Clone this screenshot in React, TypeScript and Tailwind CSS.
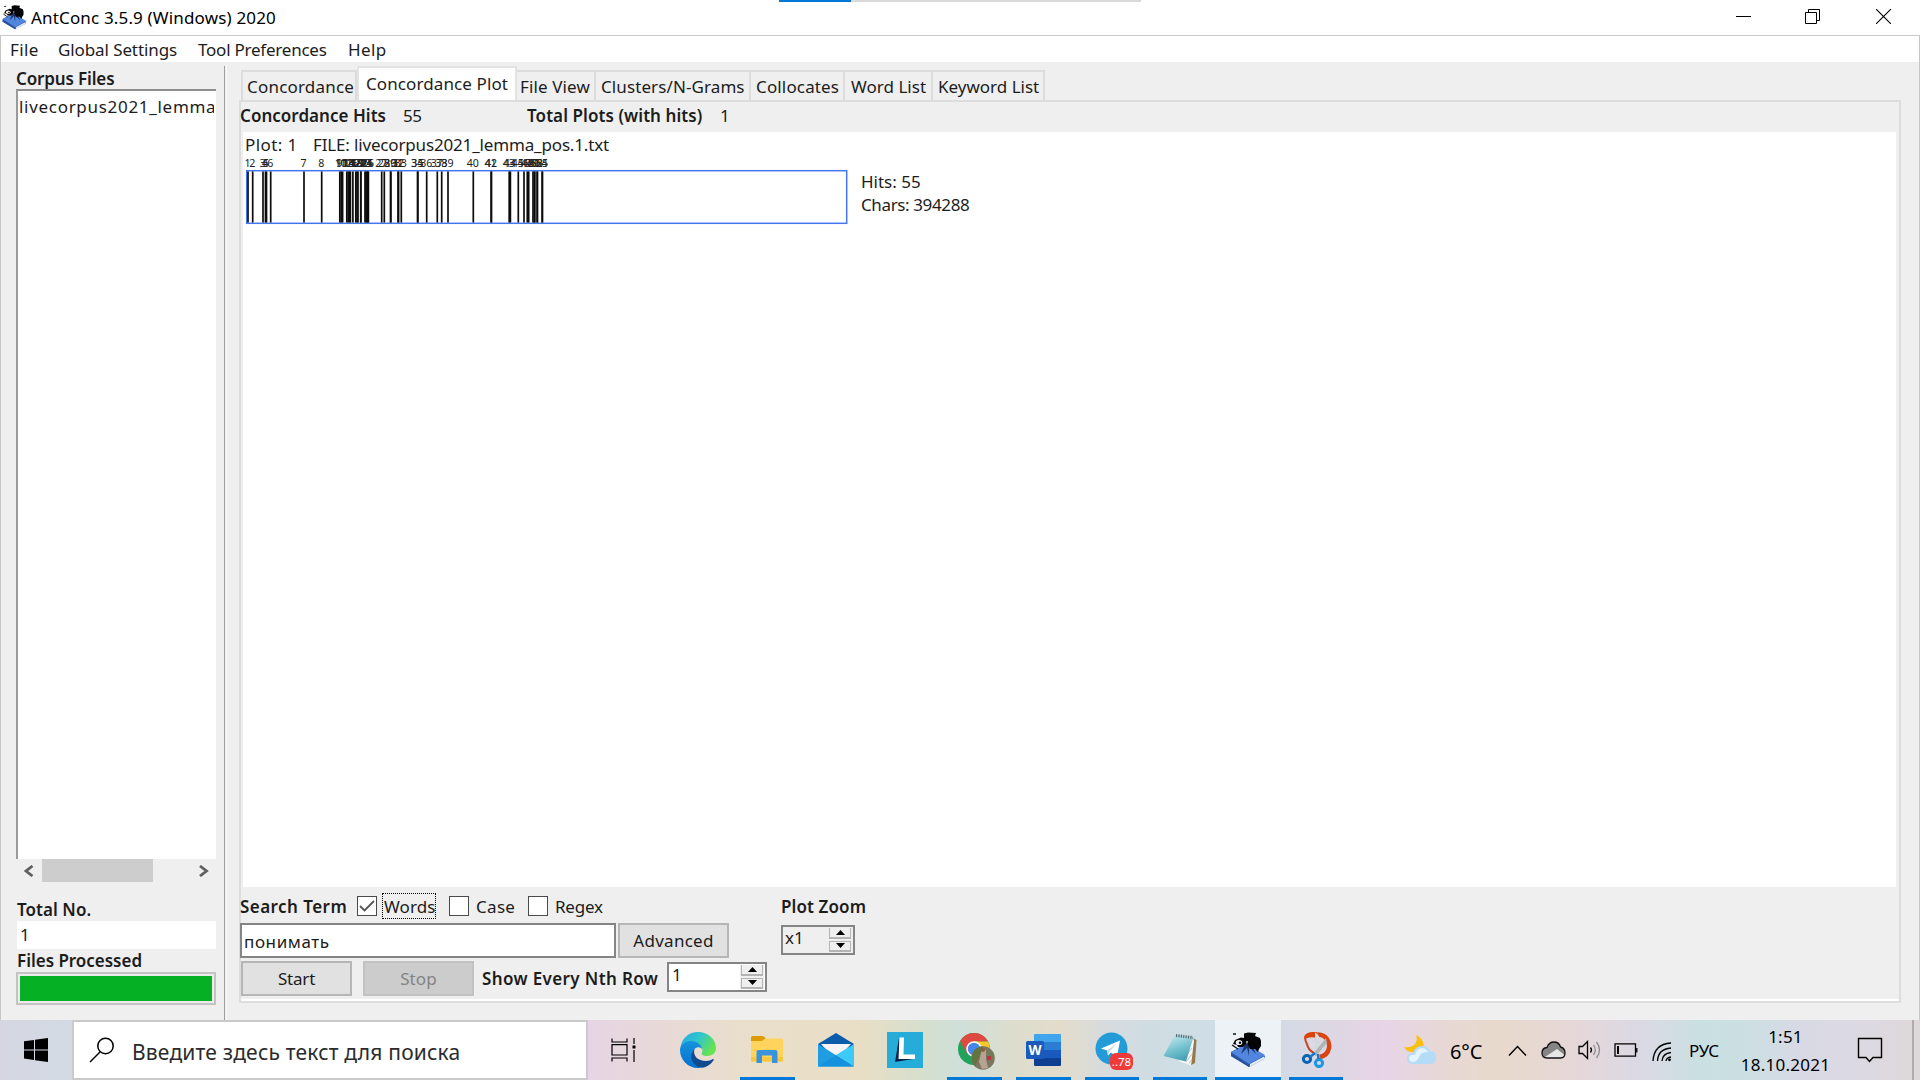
import React from "react";

/* ---------- window chrome ---------- */

function AntIcon({ className }: { className: string }) {
  return (
    <svg className={className} viewBox="0 0 36 36">
      <path d="M1 20 L16 12 L35 24 L34 27 L19 35 L1 24Z" fill="#3560b4" />
      <path d="M1 20 L16 12 L35 23 L19 32Z" fill="#5285dd" />
      <path d="M20 32 L34 24.5 L34 27 L20 34.5Z" fill="#e6ebf2" />
      <path d="M1 21 L19 32.5 L19 35 L1 24Z" fill="#29519e" />
      <path d="M11 22 L15 12 L21 11 L26 22 L19 15 L19 24 L17 16Z" fill="#1c3770" />
      <path
        d="M3 12 L5 8 L11 5.500 L14 6 L14 1.500 L18 0.500 L26 1 L25 4 L30 6 L31 9 L31 14 L29 17 L28 20 L25 17 L20 17 L17 11 L13 15 L8 15 L7 13Z"
        fill="#050507"
      />
      <ellipse cx="9" cy="10.500" rx="3.300" ry="2.600" fill="#f2f2f2" />
      <ellipse cx="10" cy="10.800" rx="1.300" ry="1.200" fill="#111" />
      <path d="M2 13 L8 17 M3 2 H6" stroke="#111" strokeWidth="1.300" />
      <circle cx="17" cy="10" r="1" fill="#b9c6dd" />
    </svg>
  );
}

function TitleBar() {
  return (
    <header className="relative flex h-9 items-center border-b border-[#cccccc] bg-white">
      <div className="absolute left-[779px] top-0 flex h-[2px]">
        <span className="w-[72px] bg-[#0078d7]" />
        <span className="w-[290px] bg-[#dadada]" />
      </div>
      <AntIcon className="ml-[2px] mt-[-1px] h-[25px] w-[25px]" />
      <span className="ml-[4px] text-[17px] tracking-[0.16px] text-black">AntConc 3.5.9 (Windows) 2020</span>
      <div className="ml-auto mr-[29px] flex items-center gap-[54px] pb-[2px] text-black">
        <svg className="h-[15px] w-[15px]" viewBox="0 0 15 15">
          <path d="M0 7.5H15" stroke="currentColor" />
        </svg>
        <svg className="h-[15px] w-[15px]" viewBox="0 0 15 15" fill="none" stroke="currentColor">
          <path d="M.5 3.5H11.5V14.5H.5Z" />
          <path d="M3.5 3.5V.5H14.5V11.5H11.5" />
        </svg>
        <svg className="ml-[2px] h-[15px] w-[15px]" viewBox="0 0 15 15">
          <path d="M0 0L15 15M15 0L0 15" stroke="currentColor" strokeWidth="1.1" />
        </svg>
      </div>
    </header>
  );
}

function MenuBar() {
  return (
    <nav className="flex h-[26px] items-center bg-white pl-[9px]">
      <span className="w-12 tracking-[0.4px]">File</span>
      <span className="w-[140px] tracking-[-0.1px]">Global Settings</span>
      <span className="w-[150px] tracking-[-0.23px]">Tool Preferences</span>
      <span className="tracking-[0.4px]">Help</span>
    </nav>
  );
}

/* ---------- left column ---------- */

function CorpusColumn() {
  return (
    <aside className="flex w-[223px] shrink-0 flex-col pl-[15px] pr-[8px]">
      <h2 className="mt-[3px] h-6 text-[17px] font-semibold leading-[27px] tracking-[-0.14px]">Corpus Files</h2>
      <div className="h-[770px] overflow-hidden border-l-2 border-t-2 border-l-[#9a9a9a] border-t-[#8e8e8e] bg-white pl-[1px]">
        <div className="w-[195px] overflow-hidden whitespace-nowrap leading-[31px] tracking-[0.7px]">livecorpus2021_lemma_pos</div>
      </div>
      <div className="flex h-[23px] items-center text-[#606060]">
        <svg className="ml-[7px] h-3 w-[11px]" viewBox="0 0 11 12" fill="none" stroke="currentColor" strokeWidth="2.8">
          <path d="M9.5 1L3 6L9.5 11" />
        </svg>
        <span className="ml-[8px] h-full w-[111px] bg-[#cdcdcd]" />
        <svg className="ml-[46px] h-3 w-[11px]" viewBox="0 0 11 12" fill="none" stroke="currentColor" strokeWidth="2.8">
          <path d="M1 1L7.5 6L1 11" />
        </svg>
      </div>
      <h2 className="mt-[14px] h-6 pl-px font-semibold leading-[27px] tracking-[0.05px]">Total No.</h2>
      <div className="mt-[1px] ml-px h-7 bg-white pl-[3px] leading-[28px]">1</div>
      <h2 className="h-[24px] pl-px font-semibold leading-[24px] tracking-[-0.02px]">Files Processed</h2>
      <div className="mt-[-1px] h-[33px] border-2 border-[#c3c3c3] bg-[#ececec] p-[2px]">
        <div className="h-full bg-[#06b025]" />
      </div>
    </aside>
  );
}

/* ---------- tool panel ---------- */

function Tabs() {
  const tab = "flex h-[30px] items-center border-r-2 border-t-2 border-[#dcdcdc] pt-[1px] whitespace-nowrap";
  return (
    <div className="flex h-[38px] items-end pl-[2px]">
      <span className={`${tab} w-[116px] border-l-2 border-r-0 pl-[4px] tracking-[0.2px]`}>Concordance</span>
      <span className="flex h-[34px] w-[160px] items-center border-x-2 border-t-2 border-[#e3e3e3] bg-white pb-px pl-[7px] tracking-[0.1px] whitespace-nowrap">
        Concordance Plot
      </span>
      <span className={`${tab} w-[79px] pl-[3px] tracking-[0.12px]`}>File View</span>
      <span className={`${tab} w-[155px] pl-[5px] tracking-[0.1px]`}>Clusters/N-Grams</span>
      <span className={`${tab} w-[94px] pl-[5px] tracking-[0.15px]`}>Collocates</span>
      <span className={`${tab} w-[88px] pl-[6px] tracking-[0.02px]`}>Word List</span>
      <span className={`${tab} w-[112px] pl-[5px] tracking-[0px]`}>Keyword List</span>
    </div>
  );
}

const HITS: number[] = [
  248, 252.7, 263, 265.5, 266.5, 270.7, 304, 321.7, 339.8, 341.2, 342.6, 346.8, 348.2, 349.6, 350.4, 352.9, 355.8, 357,
  358, 360.7, 360.9, 365, 366, 367, 367.8, 368.4, 381.7, 384.3, 390.5, 390.9, 398, 398.6, 401.3, 417.5, 417.9, 426.7,
  437.3, 441.7, 448, 473.3, 491.1, 491.5, 509.2, 510.4, 518.3, 524, 527.3, 528.7, 533, 534.4, 534.8, 537.1, 537.5,
  542.1, 542.5,
];

function PlotChart() {
  return (
    <svg className="block h-[70px] w-[610px]" viewBox="243 157 610 70">
      {HITS.map((x, i) => (
        <text key={i} x={x - 0.5} y="166.6" textAnchor="middle" fontSize="10.6" fill="#222" className="font-['Noto_Sans']">
          {i + 1}
        </text>
      ))}
      <rect x="246.7" y="170.7" width="600" height="52.6" fill="none" stroke="#4478ee" strokeWidth="1.5" />
      {HITS.map((x, i) => (
        <path key={i} d={`M${x} 171.500V222.500`} stroke="#0c0c0c" strokeWidth="1.7" />
      ))}
    </svg>
  );
}

function Checkbox({ checked }: { checked?: boolean }) {
  return (
    <span className="flex h-5 w-5 items-center justify-center border-[1.5px] border-[#4a4a4a] bg-white">
      {checked && (
        <svg className="h-4 w-4" viewBox="0 0 16 16" fill="none" stroke="#555" strokeWidth="1.8">
          <path d="M1 8L5.5 12.5L15 3" />
        </svg>
      )}
    </span>
  );
}

function Spinner({ className, value }: { className: string; value: string }) {
  return (
    <span className={`flex h-[30px] justify-between border-2 border-[#858585] p-px leading-[20px] ${className}`}>
      <span className="pl-[1px]">{value}</span>
      <span className="flex w-[24px] flex-col gap-[2px] bg-[#efefef] pl-px pr-px">
        <span className="flex flex-1 items-center justify-center border-x border-b-2 border-[#b4b4b4]">
          <svg className="h-[5px] w-[9px]" viewBox="0 0 9 5">
            <path d="M0 5L4.500 0L9 5Z" fill="#000" />
          </svg>
        </span>
        <span className="flex flex-1 items-center justify-center border border-b-2 border-[#b4b4b4]">
          <svg className="h-[5px] w-[9px]" viewBox="0 0 9 5">
            <path d="M0 0L4.500 5L9 0Z" fill="#000" />
          </svg>
        </span>
      </span>
    </span>
  );
}

function Controls() {
  return (
    <div className="flex flex-col">
      <div className="flex h-[36px] items-center pt-[2px]">
        <span className="w-[117px] font-semibold tracking-[0.45px]">Search Term</span>
        <Checkbox checked />
        <span className="ml-[5px] flex h-[26px] w-[54px] items-center border border-dotted border-black pl-px tracking-[0.1px]">Words</span>
        <span className="ml-[13px] flex">
          <Checkbox />
        </span>
        <span className="ml-[7px] w-[52px] tracking-[0.3px]">Case</span>
        <Checkbox />
        <span className="ml-[7px] w-[226px] tracking-[-0.2px]">Regex</span>
        <span className="font-semibold tracking-[0.1px]">Plot Zoom</span>
      </div>
      <div className="flex h-[35px]">
        <div className="flex w-[376px] items-center border-2 border-[#858585] bg-white pl-[2px] pt-[2px] tracking-[0.6px]">понимать</div>
        <div className="ml-[2px] flex w-[111px] items-center justify-center border-2 border-[#b6b6b6] bg-[#e1e1e1] tracking-[0.28px]">
          Advanced
        </div>
        <span className="ml-[52px] mt-[2px] flex">
          <Spinner value="x1" className="w-[74px]" />
        </span>
      </div>
      <div className="mt-[3px] flex h-[35px] items-stretch pl-px">
        <div className="flex w-[111px] items-center justify-center border-2 border-[#b6b6b6] bg-[#e1e1e1] tracking-[-0.2px]">Start</div>
        <div className="ml-[11px] flex w-[111px] items-center justify-center border-2 border-[#c2c2c2] bg-[#cccccc] tracking-[0.1px] text-[#838383]">
          Stop
        </div>
        <span className="ml-[8px] w-[185px] font-semibold leading-[35px] tracking-[0.37px]">Show Every Nth Row</span>
        <span className="mt-[1px] flex">
          <Spinner value="1" className="w-[100px] bg-white pl-[2px]" />
        </span>
      </div>
    </div>
  );
}

function ToolPanel() {
  return (
    <section className="ml-[12px] flex w-[1662px] flex-col">
      <Tabs />
      <div className="flex h-[903px] flex-col border-2 border-[#dddddd]">
        <div className="flex h-[30px] items-center pb-[3px]">
          <span className="-ml-px w-[163px] font-semibold tracking-[0.03px]">Concordance Hits</span>
          <span className="w-[124px] tracking-[-0.5px]">55</span>
          <span className="w-[193px] font-semibold tracking-[0.08px]">Total Plots (with hits)</span>
          <span>1</span>
        </div>
        <div className="ml-[2px] mr-[3px] flex h-[755px] flex-col bg-white">
          <div className="flex h-[25px] items-center pb-px pl-[2px]">
            <span className="w-[68px] tracking-[0.4px]">Plot: 1</span>
            <span className="tracking-[-0.16px]">FILE: livecorpus2021_lemma_pos.1.txt</span>
          </div>
          <div className="flex">
            <PlotChart />
            <div className="ml-[8px] pt-[13px] leading-[23px]">
              <div>Hits: 55</div>
              <div className="tracking-[-0.38px]">Chars: 394288</div>
            </div>
          </div>
        </div>
        <div className="-ml-px">
          <Controls />
        </div>
        <div className="mt-auto h-[2px] bg-white" />
      </div>
    </section>
  );
}

/* ---------- taskbar icons ---------- */

function EdgeIcon() {
  return (
    <svg className="h-9 w-9" viewBox="0 0 36 36">
      <defs>
        <linearGradient id="edgeTop" x1="0" y1="0" x2="1" y2="0.5">
          <stop offset="0" stopColor="#2aa6e0" />
          <stop offset=".5" stopColor="#2fc5cf" />
          <stop offset="1" stopColor="#66e34f" />
        </linearGradient>
        <linearGradient id="edgeBody" x1="0" y1="0" x2="0" y2="1">
          <stop offset="0" stopColor="#1593dd" />
          <stop offset="1" stopColor="#0670cf" />
        </linearGradient>
      </defs>
      <path d="M0.500 15C2 6 9 0 18 0C28 0 36 7 36 16C36 21 32 24 27 24C23 24 21 22.500 22 20.500C24 17 21 13 16 11C10 9 4 11 0.500 15Z" fill="url(#edgeTop)" />
      <path d="M0 18C0 13 5 9 11 9C17 9 22 13 22.500 18C22 15 17 14 14.500 17C11 22 15 31 24 33.500C22 35.500 19 36 18 36C8 36 0 28 0 18Z" fill="url(#edgeBody)" />
      <path d="M14.500 17C12.500 24 18 29 26 29C29 29 31 28 33 27C34 27 34 28 33.500 28.500C30 33 27 35 22 35.800C12 34 8 24 14.500 17Z" fill="#114b8f" />
    </svg>
  );
}

function FolderIcon() {
  return (
    <svg className="h-7 w-8" viewBox="0 0 32 28">
      <path d="M0 1.500Q0 0 1.500 0H12L15 2.500L12 5H0Z" fill="#dd9b05" />
      <path d="M0 5H11L14 2.500H30.500Q32 2.500 32 4V24Q32 25.500 30.500 25.500H1.500Q0 25.500 0 24Z" fill="#ffd35c" />
      <path d="M0 21H32V24Q32 25.500 30.500 25.500H1.500Q0 25.500 0 24Z" fill="#fbc63f" />
      <path d="M5.500 27V16Q5.500 14 7.500 14H24.500Q26.500 14 26.500 16V27H21V19.500H11V27Z" fill="#3a94dd" />
    </svg>
  );
}

function MailIcon() {
  return (
    <svg className="h-[34px] w-9" viewBox="0 0 36 34">
      <path d="M0 11L18 0L36 11L31 17H5Z" fill="#0b5cab" />
      <path d="M3 11H33L22 23H14Z" fill="#f4f4f6" />
      <path d="M0 11L36 33.500H0Z" fill="#1e9de3" />
      <path d="M36 11V33.500L18 22Z" fill="#3ccbf8" />
      <path d="M0 33.500L18 22L36 33.500Z" fill="#1591dd" />
    </svg>
  );
}

function LenovoIcon() {
  return (
    <svg className="h-9 w-9" viewBox="0 0 36 36">
      <path d="M0 0H36V36H0Z" fill="#26acd9" />
      <path d="M12 6L8 30L26 27L13 25Z" fill="#08234d" />
      <path d="M12.500 5.500H17L16.500 22.500H28V27H11.500Z" fill="#fff" />
    </svg>
  );
}

function ChromeIcon() {
  return (
    <svg className="mt-[2px] h-[38px] w-[38px]" viewBox="0 0 38 38">
      <circle cx="17" cy="17" r="16" fill="#22a35c" />
      <path d="M3.100 9A16 16 0 0 1 31 9.500H17L9.500 21Z" fill="#de4a3f" />
      <path d="M17 9.500H31A16 16 0 0 1 18 33L24.500 21Z" fill="#fcc62c" />
      <circle cx="17" cy="17" r="7.800" fill="#fff" />
      <circle cx="17" cy="17" r="6.200" fill="#4687ee" />
      <circle cx="26" cy="26" r="11.800" fill="#7d7560" />
      <path d="M15 23Q17 15 26 14.300L22 25L18 34Q14 30 15 23Z" fill="#62753f" />
      <path d="M25 17L29 18L29 27L31 36L25 37L22 30Z" fill="#b7a392" />
      <path d="M31 18L36 21L37 30L31 27Z" fill="#6e7d58" />
      <path d="M30 24H34V28H30Z" fill="#bb3540" />
      <circle cx="26" cy="18" r="2" fill="#8d5b3e" />
    </svg>
  );
}

function WordIcon() {
  return (
    <svg className="h-[34px] w-9" viewBox="0 0 36 34">
      <path d="M9 2Q9 1 10 1H35Q36 1 36 2V9H9Z" fill="#41a5ee" />
      <path d="M9 9H36V17H9Z" fill="#2b7cd3" />
      <path d="M9 17H36V25H9Z" fill="#185abd" />
      <path d="M9 25H36V32Q36 33 35 33H10Q9 33 9 32Z" fill="#103f91" />
      <rect x="1" y="8" width="18" height="18" rx="1.500" fill="#1b5abb" />
      <text x="10" y="22" textAnchor="middle" fontSize="13.500" fontWeight="700" fill="#fff" className="font-['Open_Sans']">
        W
      </text>
    </svg>
  );
}

function TelegramIcon() {
  return (
    <svg className="ml-[4px] mt-[2px] h-[38px] w-[38px]" viewBox="0 0 38 38">
      <circle cx="16.500" cy="16.500" r="16" fill="#239bd7" />
      <path d="M6 16.500L25 8.500L22 25L16 20.500L13 23.500L12 18.500Z" fill="#fff" />
      <path d="M12 18.500L22 11.500L14.500 19.500L13 23.500Z" fill="#bcdcec" />
      <rect x="15" y="21" width="23" height="17" rx="6" fill="#f03a3a" />
      <text x="26.500" y="33.800" textAnchor="middle" fontSize="11.500" fill="#fff" className="font-['Noto_Sans']">
        ..78
      </text>
    </svg>
  );
}

function NotepadIcon() {
  return (
    <svg className="h-[34px] w-9" viewBox="0 0 36 34">
      <defs>
        <linearGradient id="pad" x1="0" y1="0" x2="0.4" y2="1">
          <stop offset="0" stopColor="#d4eef2" />
          <stop offset=".6" stopColor="#76c3d0" />
          <stop offset="1" stopColor="#49a4b7" />
        </linearGradient>
      </defs>
      <path d="M31 5L34.500 7L33 30L29 32Z" fill="#96784a" />
      <path d="M31 4L32 8L29 32.500L17 28Z" fill="#f6f6f4" />
      <path d="M21 27L30 15M24 29L30 21M27 30.500L30 26" stroke="#aeb6b8" strokeWidth=".8" />
      <path d="M13 2L31.500 4L24 28.500L1.500 23Z" fill="url(#pad)" />
      <path d="M14 2.500L31 4.500" stroke="#59666b" strokeWidth="3" strokeDasharray="1.200 1.200" />
    </svg>
  );
}

function SnipIcon() {
  return (
    <svg className="ml-[2px] h-9 w-[30px]" viewBox="0 0 30 36">
      <path d="M14 2.500C4 0 1 5 5 12C6 17 8 19 12 21" fill="none" stroke="#c9431a" strokeWidth="2" />
      <path d="M2 5C4 0 11 -0.500 16 0.500L15 6Q8 4 3 7Z" fill="#dd4208" />
      <path d="M16 2.500C24 3 28 9 27 16C26 21 23 24 18 25" fill="none" stroke="#d94410" strokeWidth="4.500" />
      <path d="M13 0L17 4L17 21L13 22Z" fill="#d5d9dc" />
      <path d="M24 6L25 11L14 24L11 22Z" fill="#aeb4b8" />
      <circle cx="5" cy="27" r="3.600" fill="none" stroke="#0b63b4" strokeWidth="3" />
      <circle cx="17" cy="31" r="3.600" fill="none" stroke="#1a97e3" strokeWidth="3" />
      <path d="M8 25L13 21M16.500 27L16 22" stroke="#137bcd" strokeWidth="2.500" />
    </svg>
  );
}

function TaskButton({ className, running, children }: { className: string; running?: string; children: React.ReactNode }) {
  return (
    <div className={`relative flex h-full items-center justify-center ${className}`}>
      {children}
      {running && <span className={`absolute bottom-0 h-[3px] bg-[#0078d7] ${running}`} />}
    </div>
  );
}

function Tray() {
  return (
    <div className="ml-auto flex h-full items-center text-black">
      <svg className="h-[32px] w-[34px]" viewBox="0 0 34 32">
        <path d="M12 1Q14 6 11 10Q7 14 0 13Q3 19 10 18L20 12Q19 4 12 1Z" fill="#fbbf10" />
        <path d="M9 30Q3 30 3 24.500Q3 19 9 19Q11 12 18 12Q24 12 26 17Q32 17 32 24Q32 30 26 30Z" fill="#b4dcf6" />
        <path d="M9 28Q5 28 5 24Q6 20 11 21Q12 15 18 14Q22 14 24 18Q17 18 15 23Q13 28 9 28Z" fill="#e3f4fe" />
      </svg>
      <span className="ml-[12px] mt-[3px] w-[58px] text-[20px] tracking-[-0.1px]">6°C</span>
      <svg className="h-[11px] w-[19px]" viewBox="0 0 19 11" fill="none" stroke="currentColor" strokeWidth="1.400">
        <path d="M1 10.500L9.500 1.500L18 10.500" />
      </svg>
      <svg className="ml-[14px] h-[18px] w-[25px]" viewBox="0 0 25 18">
        <path d="M6 17Q1 17 1 12Q1 7 6 6.500Q8 1 13 1Q18 1 19.500 6Q24 7 24 12Q24 17 19.500 17Z" fill="#858585" />
        <path d="M4 16L16 8L23.500 14Q22 17 19 17H6Z" fill="#e6e6e6" />
        <path d="M6 17Q1 17 1 12Q1 7 6 6.500Q8 1 13 1Q18 1 19.500 6Q24 7 24 12Q24 17 19.500 17Z" fill="none" stroke="#111" strokeWidth="1.300" />
      </svg>
      <svg className="ml-[12px] h-[20px] w-[24px]" viewBox="0 0 24 20" fill="none" stroke="currentColor" strokeWidth="1.300">
        <path d="M1 6.500H4.500L9.500 1.500V18.500L4.500 13.500H1Z" />
        <path d="M12.500 7.500Q14.500 10 12.500 12.500" />
        <path d="M15.500 5Q19 10 15.500 15M18.500 2Q24.500 10 18.500 18" stroke="#8f8a92" />
      </svg>
      <svg className="ml-[12px] h-[14px] w-[24px]" viewBox="0 0 24 14" fill="none" stroke="currentColor" strokeWidth="1.300">
        <path d="M1 .8H21.500V13.200H1Z" />
        <path d="M22.800 5V9.500" />
        <path d="M3 3H5V11H3Z" fill="currentColor" stroke="none" />
      </svg>
      <svg className="ml-[14px] mt-[4px] h-[20px] w-[20px]" viewBox="0 0 20 20" fill="none" stroke="currentColor" strokeWidth="1.300">
        <path d="M1 19Q2 2 19 1M5.500 19Q6 7 19 6M10 19Q10.500 11.500 19 10.500" />
        <path d="M14 19Q14.500 15.500 19 15" />
        <circle cx="17.500" cy="17.800" r="1.400" fill="currentColor" stroke="none" />
      </svg>
      <span className="ml-[17px] w-[53px] text-[17px] tracking-[-0.2px]">РУС</span>
      <div className="flex w-[87px] flex-col items-center pt-[1px] text-[17px] leading-[28px] tracking-[0.24px]">
        <span>1:51</span>
        <span>18.10.2021</span>
      </div>
      <svg className="ml-[28px] h-[26px] w-[26px]" viewBox="0 0 26 26" fill="none" stroke="currentColor" strokeWidth="1.400">
        <path d="M1.500 1.500H24.500V20.500H16L12.500 24.500L9 20.500H1.500Z" />
      </svg>
      <span className="ml-[29px] mr-[6px] h-full w-[2px] bg-[#adadb0]" />
    </div>
  );
}

function Taskbar() {
  return (
    <footer className="flex h-[60px] items-stretch bg-[linear-gradient(90deg,#d5d6e2_0px,#d3dae3_73px,#d3dae3_300px,#e6d5e4_590px,#e8dad4_680px,#eadfcb_750px,#e9dec6_860px,#d6dfcd_920px,#cfdfda_960px,#dcddcd_1010px,#e3dccb_1060px,#d6dbdf_1110px,#cfdde3_1150px,#cfdde6_1210px,#d5dae5_1290px,#dfd6e3_1340px,#e8d4e7_1385px,#e7d8d6_1440px,#e8d9cc_1500px,#e5d7d8_1580px,#dcd8e3_1630px,#d6dbe4_1660px,#c9e0e2_1700px,#ccdfe3_1750px,#d8d9e5_1800px,#dcd9e3_1860px,#ded8da_1910px)]">
      <div className="flex w-[72px] items-center justify-center">
        <svg className="mb-px h-6 w-6" viewBox="0 0 24 24" fill="#000">
          <path d="M0 3.300L10 1.900V11.400H0ZM11 1.700L24 0V11.400H11ZM0 12.500H10V22L0 20.600ZM11 12.500H24V24L11 22.200Z" />
        </svg>
      </div>
      <div className="flex w-[516px] items-center border-2 border-[#cacaca] bg-white">
        <svg className="mb-[1px] ml-[15px] h-[26px] w-[26px]" viewBox="0 0 26 26" fill="none" stroke="#000" strokeWidth="1.500">
          <circle cx="16.500" cy="9" r="7.700" />
          <path d="M11 15L1 25" />
        </svg>
        <span className="ml-[17px] mt-[5px] whitespace-nowrap text-[21px] tracking-[0.19px] text-[#2b2b2b]">Введите здесь текст для поиска</span>
      </div>
      <TaskButton className="w-[75px] pr-[3px]">
        <svg className="h-6 w-[26px]" viewBox="0 0 26 24" fill="none" stroke="#000" strokeWidth="1.200">
          <path d="M1 .5V4H16V.5M1 6.600H16V17H1ZM1 23.500V20H16V23.500M23 0V6M23 12V24" />
          <path d="M21.500 7.500H24.500V10.500H21.500Z" fill="#000" stroke="none" />
        </svg>
      </TaskButton>
      <TaskButton className="w-[69px]">
        <EdgeIcon />
      </TaskButton>
      <TaskButton className="w-[69px]" running="left-[8px] w-[55px]">
        <FolderIcon />
      </TaskButton>
      <TaskButton className="w-[69px]">
        <MailIcon />
      </TaskButton>
      <TaskButton className="w-[69px]">
        <LenovoIcon />
      </TaskButton>
      <TaskButton className="w-[69px] pl-[4px]" running="left-[8px] w-[55px]">
        <ChromeIcon />
      </TaskButton>
      <TaskButton className="w-[69px]" running="left-[8px] w-[55px]">
        <WordIcon />
      </TaskButton>
      <TaskButton className="w-[69px]" running="left-[8px] w-[54px]">
        <TelegramIcon />
      </TaskButton>
      <TaskButton className="w-[69px] pr-px" running="left-[7px] w-[54px]">
        <NotepadIcon />
      </TaskButton>
      <TaskButton className="w-[66px] bg-[#edf2f6]" running="left-0 w-full">
        <AntIcon className="h-9 w-9" />
      </TaskButton>
      <TaskButton className="w-[70px]" running="left-[8px] w-[54px]">
        <SnipIcon />
      </TaskButton>
      <Tray />
    </footer>
  );
}

export default function App() {
  return (
    <div className="flex h-[1080px] w-[1920px] flex-col overflow-hidden bg-[#efefef] font-['Noto_Sans','Open_Sans',sans-serif] text-[17px] leading-none text-[#1c1c1c]">
      <TitleBar />
      <div className="flex h-[984px] flex-col border-x border-[#c6c6c6]">
        <MenuBar />
        <div className="flex flex-1">
          <CorpusColumn />
          <div className="mt-[4px] w-[3px] border-l-[1.5px] border-r-[1.5px] border-l-[#9f9f9f] border-r-[#fafafa]" />
          <ToolPanel />
        </div>
      </div>
      <Taskbar />
    </div>
  );
}
